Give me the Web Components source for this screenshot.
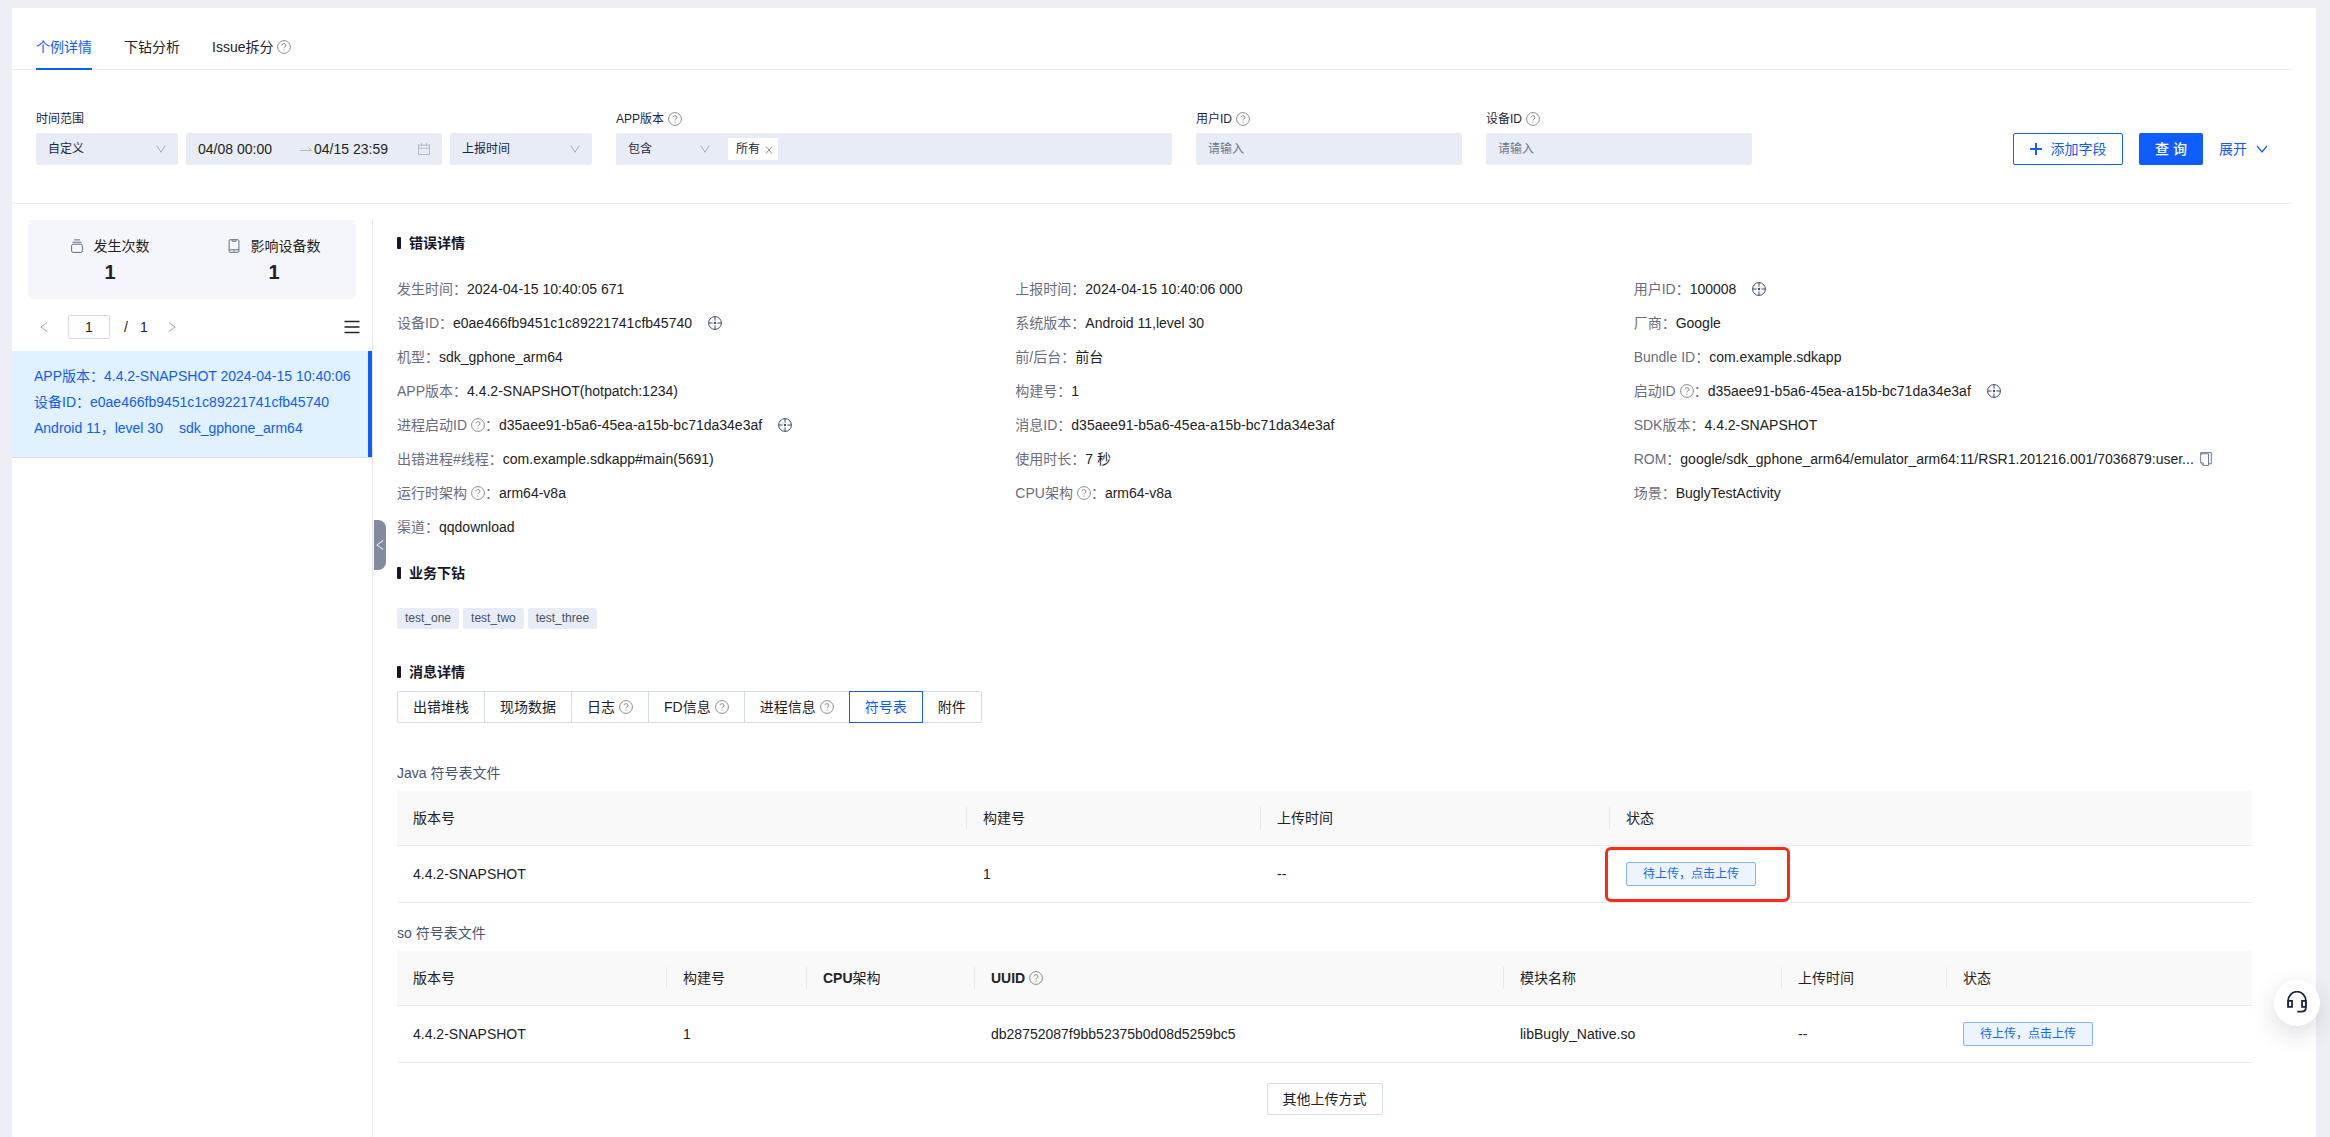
<!DOCTYPE html>
<html lang="zh-CN">
<head>
<meta charset="utf-8">
<meta name="viewport" content="width=device-width, initial-scale=1">
<title>个例详情</title>
<style>
:root{--blue:#0f5cff;--ink:#222;--navy:#1b2740;--field:#e8edf5;--line:#ebebed;--muted:#6c6c7c}
html,body{margin:0}
body{background:#eeeff4;color:var(--ink);font:14px/22px "Liberation Sans","Noto Sans CJK SC",sans-serif}
</style>
</head>
<body>
<issue-page></issue-page>
<script>
const RESET = `*,*::before,*::after{box-sizing:border-box}
button,input,select{font:inherit;color:inherit;margin:0;border:0;background:none;outline:0}
button,select{cursor:pointer}a{color:inherit;text-decoration:none}`;

function define(name, css, html) {
  customElements.define(name, class extends HTMLElement {
    connectedCallback() {
      if (this.shadowRoot) return;
      const t = document.createElement('template');
      t.innerHTML = `<style>${RESET}${css}</style>${typeof html === 'function' ? html(this) : html}`;
      this.attachShadow({ mode: 'open' }).append(t.content.cloneNode(true));
    }
  });
}

const ICONS = {
  help: [14, 14, '<circle cx="7" cy="7" r="6.4"/><path d="M5 5.4a2 1.8 0 1 1 2.7 1.7q-.7.3-.7 1.3M7 9.6v1.2"/>'],
  down: [12, 12, '<path d="M1.8 2.5 6 9.2l4.2-6.7"/>'],
  expand: [12, 12, '<path stroke-width="1.3" d="M1 2.8 6 9l5-6.2"/>'],
  left: [8, 12, '<path d="M7.2 1.5.8 6l6.4 4.5"/>'],
  right: [8, 12, '<path d="m.8 1.5 6.4 4.5-6.4 4.5"/>'],
  close: [8, 10, '<path d="m1 1.5 6 7M7 1.5l-6 7"/>'],
  arrow: [12, 10, '<path d="M0 6.5h11.5L8 3"/>'],
  calendar: [12, 12, '<path d="M.5 2h11v9.5H.5zM.5 5.2h11M3.5.3v3M8.5.3v3"/>'],
  plus: [12, 12, '<path stroke-width="2" d="M6 0v12M0 6h12"/>'],
  target: [14, 14, '<circle cx="7" cy="7" r="6.4"/><path d="M7 .6v4M7 9.4v4M.6 7h4M9.4 7h4"/><circle cx="7" cy="7" r="1.2" fill="currentColor" stroke="none"/>'],
  copy: [12, 14, '<path d="M.7 2.5V.6h10.6v11.2H9M.7 1.8h7.8v11.6H3.2L.7 10.9zM.7 10.9h2.5v2.5"/>'],
  times: [12, 14, '<rect x=".6" y="5.2" width="10.8" height="8.2" rx="1.5"/><path d="M1.4 3.2h9.2M3 .9h6"/>'],
  phone: [12, 14, '<rect x="1.1" y=".7" width="9.8" height="12.6" rx="1"/><path d="M1.1 10.8h9.8M4 .9v1.3h4V.9M5.2 12h1.6"/>'],
  menu: [16, 14, '<path stroke-width="1.6" d="M.5 1.5h15M.5 7h15M.5 12.5h15"/>'],
  headset: [22, 24, '<path stroke-width="1.8" d="M2.2 15.5v-6a8.5 8.5 0 0 1 17.6 0v6M2 9.8h4v6H2zM16 9.8h4v6h-4zM19.8 15.5v1.5q0 3.6-4.6 3.6h-4"/>']
};
define('ui-icon', `:host{display:inline-flex;flex:none}svg{display:block;fill:none;stroke:currentColor}`,
  el => { const [w, h, d] = ICONS[el.getAttribute('name')];
    return `<svg width="${w}" height="${h}" viewBox="0 0 ${w} ${h}" aria-hidden="true">${d}</svg>`; });

define('help-tip', `:host{display:inline-flex;vertical-align:-2px;margin-left:4px;color:#8c8c8c}`,
  `<ui-icon name="help"></ui-icon>`);

define('page-tabs', `:host{display:block;padding-left:24px;border-bottom:1px solid var(--line)}
nav{display:flex;gap:32px;height:62px;align-items:stretch;margin-bottom:-1px}
a{padding-top:28px;border-bottom:2px solid transparent}
a[aria-current]{color:var(--blue);border-color:var(--blue)}`,
  `<nav><a href="#case" aria-current="page">个例详情</a><a href="#drill">下钻分析</a><a href="#split">Issue拆分<help-tip></help-tip></a></nav>`);

define('filter-bar', `:host{display:block;border-bottom:1px solid var(--line);padding:39px 24px 38px 24px;font-size:12px;color:var(--navy)}
form{display:grid;grid-template-columns:556fr 556fr 266fr 266fr 492fr;gap:24px;align-items:end}
.field{display:flex;flex-direction:column;gap:4px;min-width:0}
.name{display:flex;align-items:center;line-height:20px}
.row{display:flex;gap:8px}
.sel{display:grid;flex:1;background:var(--field);border-radius:2px;height:32px;min-width:0}
.sel>*{grid-area:1/1}
.sel ui-icon{align-self:center;justify-self:end;margin-right:11px;color:#a9adb5;pointer-events:none}
select{appearance:none;width:100%;padding:0 12px}
.range{flex:0 1 256px;display:flex;align-items:center;padding:0 12px;background:var(--field);border-radius:2px;font-size:14px;color:var(--ink)}
.range input{width:102px;padding:0;min-width:0}
.range ui-icon{color:#b4b7bd}.range ui-icon:last-child{margin-left:auto}.range input+ui-icon+input{margin-left:2px}
.version{display:flex;align-items:center;background:var(--field);border-radius:2px}
.version .sel{flex:0 0 104px}.version .sel ui-icon{margin-right:9px}
.tag{display:inline-flex;align-items:center;gap:5px;margin-left:8px;height:22px;padding:0 5px 0 8px;background:#fff}
.tag button{display:flex;padding:2px 0 0;color:#8c8f96}
.text{width:100%;height:32px;padding:0 12px;background:var(--field);border-radius:2px}
.text::placeholder{color:#6a7589;opacity:1}
.actions{display:flex;justify-content:flex-end;align-items:center;gap:16px;font-size:14px}
.actions button{height:32px;border-radius:2px;color:var(--blue);display:flex;align-items:center;justify-content:center;gap:9px;padding:0;white-space:nowrap}
.actions .add{width:110px;border:1px solid var(--blue)}
.actions .go{width:64px;background:var(--blue);color:#fff;font-weight:500;gap:4px}`,
  `<form onsubmit="return false">
  <div class="field"><label class="name" for="range">时间范围</label><div class="row">
    <div class="sel"><select id="range"><option>自定义</option></select><ui-icon name="down"></ui-icon></div>
    <div class="range"><input aria-label="开始时间" value="04/08 00:00"><ui-icon name="arrow"></ui-icon><input aria-label="结束时间" value="04/15 23:59"><ui-icon name="calendar"></ui-icon></div>
    <div class="sel"><select aria-label="时间类型"><option>上报时间</option></select><ui-icon name="down"></ui-icon></div></div></div>
  <div class="field"><label class="name" for="ver">APP版本<help-tip></help-tip></label>
    <div class="version"><div class="sel"><select id="ver"><option>包含</option></select><ui-icon name="down"></ui-icon></div><span class="tag">所有<button type="button" aria-label="移除"><ui-icon name="close"></ui-icon></button></span></div></div>
  <div class="field"><label class="name" for="user">用户ID<help-tip></help-tip></label><input class="text" id="user" placeholder="请输入"></div>
  <div class="field"><label class="name" for="device">设备ID<help-tip></help-tip></label><input class="text" id="device" placeholder="请输入"></div>
  <div class="actions"><button type="button" class="add"><ui-icon name="plus"></ui-icon>添加字段</button><button class="go">查 询</button><button type="button">展开<ui-icon name="expand"></ui-icon></button></div>
  </form>`);

define('case-stat', `:host{display:flex;flex:1;flex-direction:column;align-items:center}
.top{display:flex;align-items:center;gap:11px}ui-icon{color:#5f6d85}
.num{font-size:20px;font-weight:700;line-height:30px}`,
  el => `<div class="top"><ui-icon name="${el.getAttribute('icon')}"></ui-icon><slot></slot></div><div class="num">${el.getAttribute('count')}</div>`);

define('case-list', `:host{display:block;flex:0 0 361px;border-right:1px solid #e4e6ea}
.stats{display:flex;margin:0 16px;padding:15px 0 12px;background:#f5f6fb;border-radius:4px}
.pager{display:flex;align-items:center;height:52px;padding:4px 12px 0 28px}
.pager button{display:flex;padding:0;color:#a8a8a8}
.pager input{width:42px;height:24px;margin:0 14px 0 20px;text-align:center;border:1px solid #d5daea;border-radius:2px;padding:0}
.pager .of{display:flex;gap:12px;margin-right:20px}
.pager .menu{margin-left:auto;color:#222}
.case{display:block;padding:12px 0 16px 22px;line-height:26px;color:var(--blue);background:#e1f1ff;border-right:4px solid var(--blue);white-space:nowrap}
.wrap{border-bottom:1px solid #dcdfe8}
.gap{display:inline-block;width:16px}`,
  `<div class="stats"><case-stat icon="times" count="1">发生次数</case-stat><case-stat icon="phone" count="1">影响设备数</case-stat></div>
  <div class="pager"><button aria-label="上一页"><ui-icon name="left"></ui-icon></button><input aria-label="页码" value="1"><span class="of"><span>/</span><span>1</span></span><button aria-label="下一页"><ui-icon name="right"></ui-icon></button><button class="menu" aria-label="列表"><ui-icon name="menu"></ui-icon></button></div>
  <div class="wrap"><a class="case" href="#1"><div>APP版本：4.4.2-SNAPSHOT 2024-04-15 10:40:06</div><div>设备ID：e0ae466fb9451c1c89221741cfb45740</div><div>Android 11，level 30<span class="gap"></span>sdk_gphone_arm64</div></a></div>`);

define('collapse-handle', `:host{position:absolute;left:362px;top:300px}
button{display:flex;align-items:center;justify-content:center;width:12px;height:50px;padding:0;border-radius:0 8px 8px 0;background:#828ba0;color:#fff}`,
  `<button aria-label="收起"><ui-icon name="left"></ui-icon></button>`);

define('section-title', `:host{display:block}h2{display:flex;align-items:center;gap:8px;margin:0;font-size:14px;line-height:22px;font-weight:700;color:#161628}
h2::before{content:"";width:4px;height:12px;border-radius:1px;background:#161628}`, `<h2><slot></slot></h2>`);

define('info-item', `:host{display:flex;align-items:center;line-height:34px;white-space:nowrap;min-width:0}
.label{color:var(--muted)}button{display:flex;padding:0;margin-left:16px;color:#3c4d70}
button.copy{margin-left:6px;color:#6b7a98}`,
  el => { const a = el.getAttribute('action');
    return `<span class="label">${el.getAttribute('label')}${el.hasAttribute('help') ? '<help-tip></help-tip>' : ''}：</span><slot></slot>` +
      (a ? `<button class="${a}" aria-label="${a === 'copy' ? '复制' : '筛选'}"><ui-icon name="${a}"></ui-icon></button>` : ''); });

define('info-grid', `:host{display:grid;grid-template-columns:repeat(3,minmax(0,1fr));margin:18px 0}`, `<slot></slot>`);

define('tag-list', `:host{display:flex;gap:4px;margin:24px 0 32px;font-size:12px}
::slotted(span){padding:0 8px;line-height:21px;border-radius:2px;background:var(--field);color:#44506a}`, `<slot></slot>`);

define('message-tabs', `:host{display:flex;margin:8px 0 39px}
button{height:32px;padding:0 15px;border:1px solid #d5dce8;margin-left:-1px;white-space:nowrap}
style+button{margin-left:0;border-radius:2px 0 0 2px}button:last-child{border-radius:0 2px 2px 0}
button[aria-pressed]{border-color:var(--blue);color:var(--blue);z-index:1}`,
  `<button>出错堆栈</button><button>现场数据</button><button>日志<help-tip></help-tip></button><button>FD信息<help-tip></help-tip></button><button>进程信息<help-tip></help-tip></button><button aria-pressed="true">符号表</button><button>附件</button>`);

define('upload-button', `:host{display:inline-block;position:relative;vertical-align:middle}
button{display:block;height:24px;padding:0 16px;border:1px solid #82b1ff;border-radius:2px;background:#edf4ff;color:#146aff;font-size:12px;line-height:20px;white-space:nowrap}
:host([marked])::after{content:"";position:absolute;inset:-15px -34px -16px -21px;border:3px solid #fb2b1a;border-radius:6px;pointer-events:none}`,
  `<button>待上传，点击上传</button>`);

const TABLES = {
  java: { cols: [570, 294, 349, 642], head: ['版本号', '构建号', '上传时间', '状态'],
    row: ['4.4.2-SNAPSHOT', '1', '--', '<upload-button marked></upload-button>'] },
  so: { cols: [270, 140, 168, 529, 278, 165, 305],
    head: ['版本号', '构建号', '<b>CPU</b>架构', '<b>UUID</b><help-tip></help-tip>', '模块名称', '上传时间', '状态'],
    row: ['4.4.2-SNAPSHOT', '1', '', 'db28752087f9bb52375b0d08d5259bc5', 'libBugly_Native.so', '--', '<upload-button></upload-button>'] }
};
define('symbol-table', `:host{display:block;margin-bottom:19px}
table{width:100%;table-layout:fixed;border-collapse:separate;border-spacing:0;text-align:left}
caption{text-align:left;color:#475670;padding-bottom:7px}
th,td{padding:0 16px;border-bottom:1px solid var(--line);white-space:nowrap}
th{height:55px;font-weight:400;background:#f9f9f9}
th:not(:last-child){background:linear-gradient(#e8e8e8,#e8e8e8) right center/1px 22px no-repeat #f9f9f9}
td{height:57px}`,
  el => { const t = TABLES[el.getAttribute('kind')];
    return `<table><caption>${el.getAttribute('caption')}</caption><colgroup>${t.cols.map(w => `<col style="width:${w}px">`).join('')}</colgroup>
    <thead><tr>${t.head.map(h => `<th scope="col">${h}</th>`).join('')}</tr></thead><tbody><tr>${t.row.map(c => `<td>${c}</td>`).join('')}</tr></tbody></table>`; });

define('case-detail', `:host{display:block;flex:1;min-width:0;padding:12px 64px 22px 24px}
.more{display:flex;justify-content:center;margin-top:20px}
.more button{height:32px;padding:0 15px;border:1px solid #d5dce8;border-radius:2px}
symbol-table:last-of-type{margin-bottom:0}`,
  `<section-title>错误详情</section-title>
  <info-grid>
  <info-item label="发生时间">2024-04-15 10:40:05 671</info-item><info-item label="上报时间">2024-04-15 10:40:06 000</info-item><info-item label="用户ID" action="target">100008</info-item>
  <info-item label="设备ID" action="target">e0ae466fb9451c1c89221741cfb45740</info-item><info-item label="系统版本">Android 11,level 30</info-item><info-item label="厂商">Google</info-item>
  <info-item label="机型">sdk_gphone_arm64</info-item><info-item label="前/后台">前台</info-item><info-item label="Bundle ID">com.example.sdkapp</info-item>
  <info-item label="APP版本">4.4.2-SNAPSHOT(hotpatch:1234)</info-item><info-item label="构建号">1</info-item><info-item label="启动ID" help action="target">d35aee91-b5a6-45ea-a15b-bc71da34e3af</info-item>
  <info-item label="进程启动ID" help action="target">d35aee91-b5a6-45ea-a15b-bc71da34e3af</info-item><info-item label="消息ID">d35aee91-b5a6-45ea-a15b-bc71da34e3af</info-item><info-item label="SDK版本">4.4.2-SNAPSHOT</info-item>
  <info-item label="出错进程#线程">com.example.sdkapp#main(5691)</info-item><info-item label="使用时长">7 秒</info-item><info-item label="ROM" action="copy">google/sdk_gphone_arm64/emulator_arm64:11/RSR1.201216.001/7036879:user...</info-item>
  <info-item label="运行时架构" help>arm64-v8a</info-item><info-item label="CPU架构" help>arm64-v8a</info-item><info-item label="场景">BuglyTestActivity</info-item>
  <info-item label="渠道">qqdownload</info-item>
  </info-grid>
  <section-title>业务下钻</section-title>
  <tag-list><span>test_one</span><span>test_two</span><span>test_three</span></tag-list>
  <section-title>消息详情</section-title>
  <message-tabs></message-tabs>
  <symbol-table kind="java" caption="Java 符号表文件"></symbol-table>
  <symbol-table kind="so" caption="so 符号表文件"></symbol-table>
  <div class="more"><button>其他上传方式</button></div>`);

define('support-button', `:host{position:fixed;right:10px;bottom:111px;z-index:5}
button{display:flex;align-items:center;justify-content:center;width:46px;height:46px;padding:0;border-radius:50%;background:#fff;color:#1b2740;box-shadow:0 8px 24px rgba(30,40,60,.16)}`,
  `<button aria-label="在线客服"><ui-icon name="headset"></ui-icon></button>`);

define('issue-page', `:host{display:block;padding:8px 14px 0 12px}
main{display:flex;flex-direction:column;min-height:calc(100vh - 8px);background:#fff}
.top{margin-right:24px}
.body{display:flex;flex:1;position:relative;margin-top:16px}`,
  `<main><div class="top"><page-tabs></page-tabs><filter-bar></filter-bar></div>
  <div class="body"><case-list></case-list><case-detail></case-detail><collapse-handle></collapse-handle></div></main><support-button></support-button>`);
</script>
</body>
</html>
